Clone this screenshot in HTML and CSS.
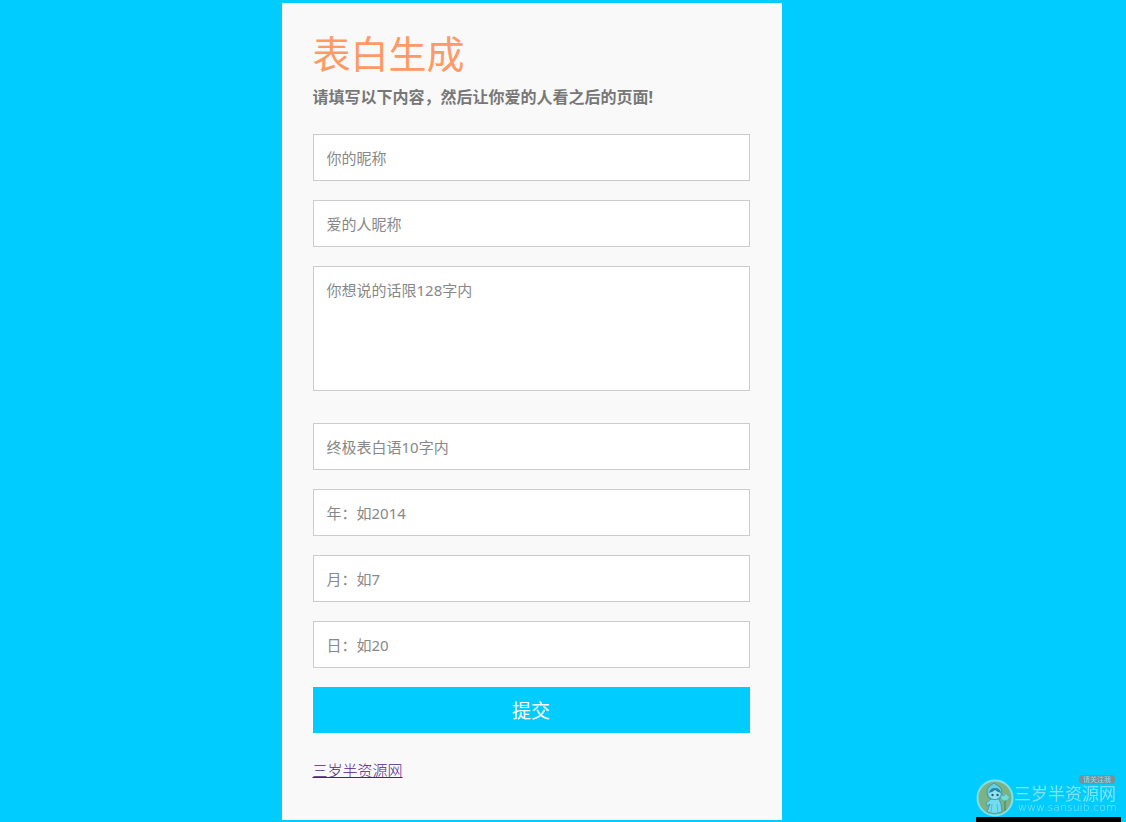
FILE: index.html
```
<!DOCTYPE html>
<html lang="zh-CN">
<head>
    <meta charset="UTF-8">
    <meta name="viewport" content="width=device-width, initial-scale=1.0">
    <title>表白生成</title>
    <link rel="stylesheet" href="styles.css">
</head>
<body>
    <form class="form" action="#" method="post">
        <h1 class="title">表白生成</h1>
        <p class="subtitle">请填写以下内容，然后让你爱的人看之后的页面!</p>

        <input class="field" type="text" name="name" placeholder="你的昵称" aria-label="你的昵称">
        <input class="field" type="text" name="lover" placeholder="爱的人昵称" aria-label="爱的人昵称">
        <textarea class="field message" name="message" maxlength="128" placeholder="你想说的话限128字内" aria-label="你想说的话限128字内"></textarea>
        <input class="field" type="text" name="final" maxlength="10" placeholder="终极表白语10字内" aria-label="终极表白语10字内">
        <input class="field" type="text" name="year" placeholder="年：如2014" aria-label="年">
        <input class="field" type="text" name="month" placeholder="月：如7" aria-label="月">
        <input class="field" type="text" name="day" placeholder="日：如20" aria-label="日">

        <button class="button" type="submit">提交</button>
        <a class="link" href="#">三岁半资源网</a>
    </form>

    <div class="watermark">
        <svg class="logo" viewBox="0 0 38 38" aria-hidden="true">
            <circle cx="19" cy="19" r="17.5" fill="#7fb283" stroke="#82dff0" stroke-width="2"/>
            <!-- 裙子 -->
            <path d="M15 20 L23 20 L25 25 L26 33 Q18 36 11 33 L14 25 L11 27 L10 24 Z" fill="#74dcef" stroke="#2c8fa5" stroke-width=".7"/>
            <path d="M16 25 L15 33 M21 25 L22 33" stroke="#3aa5ba" stroke-width=".6"/>
            <!-- 头 -->
            <path d="M12 18 Q9 9 15 6 L18 4 L21 6 Q28 9 25 18 Q19 23 12 18 Z" fill="#65cfe4" stroke="#2c8fa5" stroke-width=".8"/>
            <path d="M13 15 Q13 10 19 10 Q25 10 24 15 Q23 20 19 20 Q14 20 13 15 Z" fill="#94e4ee"/>
            <path d="M13 14 Q14 9 19 9 Q24 9 25 14 Q21 13 19 11 Q17 13 13 14 Z" fill="#2786a0"/>
            <circle cx="16.5" cy="16" r="1.2" fill="#205f78"/>
            <circle cx="21.5" cy="16" r="1.2" fill="#205f78"/>
            <!-- 扇子 -->
            <path d="M25 16 L28 17 L30 14 L32 17 L34 17 L32 21 L28 22 L25 20 Z" fill="#79dbd6" stroke="#48aaa9" stroke-width=".6"/>
            <path d="M29 22 L29 32" stroke="#327e79" stroke-width=".9"/>
        </svg>
        <div class="brand">
            <span class="badge">请关注我</span>
            <span class="brand-name">三岁半资源网</span>
            <span class="brand-url">www.sansuib.com</span>
        </div>
    </div>
</body>
</html>
```
FILE: styles.css
```
* {
    box-sizing: border-box;
}

body {
    margin: 0;
    padding: 3px 0 2px;
    background: #00ccff;
    font-family: "Noto Sans", "Noto Sans CJK SC", sans-serif;
    font-size: 15px;
}

.form {
    max-width: 500px;
    margin-left: 25%;
    padding: 25px 32px 39px 31px;
    background: #f9f9f9;
}

.title {
    margin: 0;
    color: #ff9966;
    font-size: 38px;
    font-weight: 400;
    line-height: 50px;
}

.subtitle {
    margin: 6px 0 23px;
    color: #777;
    font-size: 16px;
    font-weight: bold;
    line-height: 27px;
}

.field {
    display: block;
    width: 100%;
    height: 47px;
    margin: 0 0 19px;
    padding: 12px 13px;
    border: 1px solid #ccc;
    border-radius: 0;
    background: #fff;
    color: #777;
    font: inherit;
    line-height: 22px;
    outline: none;
}

.field::placeholder {
    color: #888;
    opacity: 1;
}

.message {
    height: 125px;
    margin-bottom: 32px;
    resize: none;
}

.button {
    display: block;
    width: 100%;
    height: 46px;
    margin: 0 0 26px;
    padding: 0;
    border: none;
    background: #00ccff;
    color: #fff;
    font: inherit;
    font-size: 19px;
    cursor: pointer;
}

.link {
    display: inline-block;
    color: #551a8b;
    font-weight: 300;
    line-height: 22px;
}

.watermark {
    position: fixed;
    right: 5px;
    bottom: 0;
    display: flex;
    align-items: flex-end;
    width: 145px;
    border-bottom: 5px solid #000;
    color: #7de3f5;
}

.logo {
    flex: none;
    width: 38px;
    height: 38px;
}

.brand {
    display: flex;
    flex: 1;
    flex-direction: column;
    padding-bottom: 4px;
    white-space: nowrap;
}

.badge {
    align-self: flex-end;
    margin-right: 6px;
    padding: 0 4px;
    border-radius: 4px;
    background: #7c8f96;
    font-size: 7px;
    line-height: 9px;
}

.brand-name {
    font-family: "Noto Sans CJK SC", sans-serif;
    font-size: 17px;
    line-height: 18px;
}

.brand-url {
    padding-left: 4px;
    font-family: "DejaVu Sans", sans-serif;
    font-size: 11px;
    font-weight: 200;
    line-height: 11px;
}
```
